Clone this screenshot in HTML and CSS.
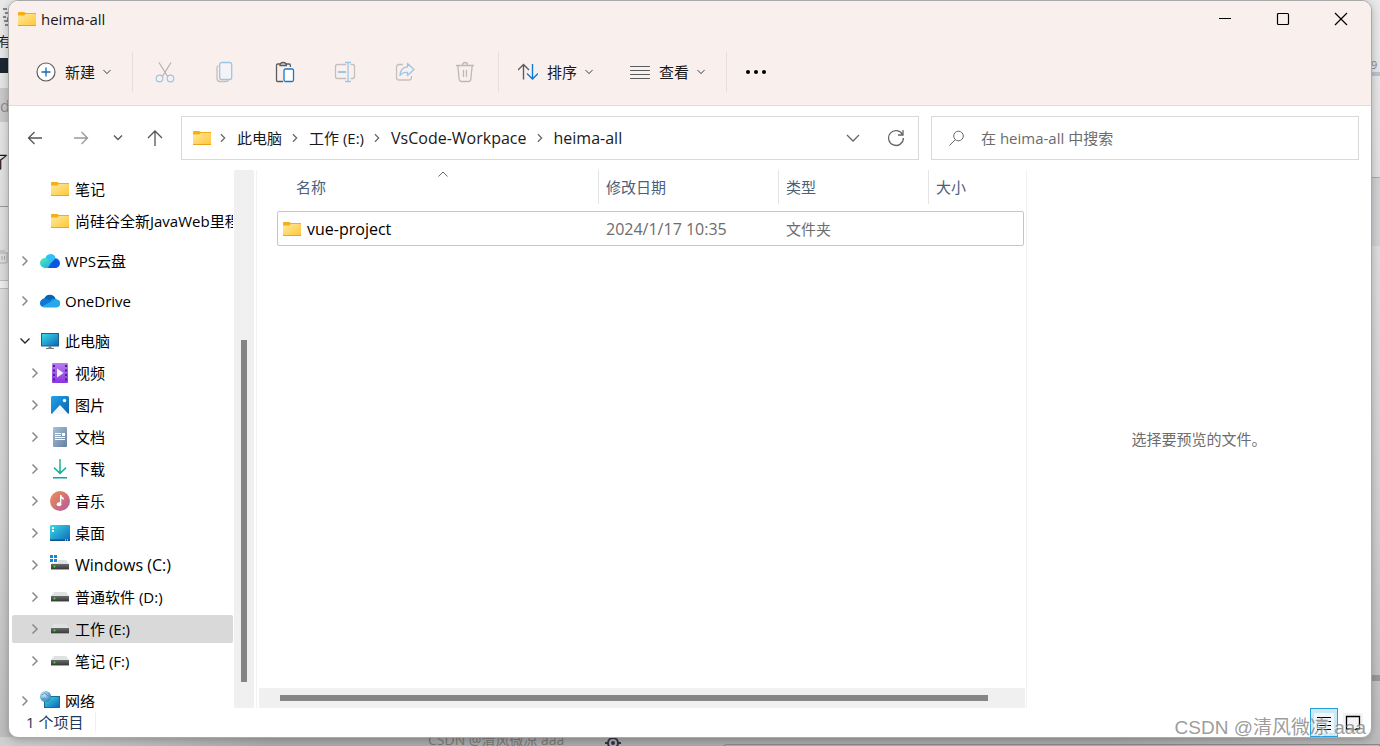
FILE: index.html
```html
<!DOCTYPE html>
<html lang="zh-CN">
<head>
<meta charset="utf-8">
<title>heima-all</title>
<link rel="stylesheet" href="styles.css">
</head>
<body>
<svg class="defs" aria-hidden="true">
  <defs>
    <linearGradient id="g-folder" x1="0" y1="0" x2="1" y2="1"><stop offset="0" stop-color="#ffe9a0"/><stop offset="1" stop-color="#ffc83a"/></linearGradient>
    <linearGradient id="g-screen" x1="0" y1="0" x2="1" y2="1"><stop offset="0" stop-color="#38dbe4"/><stop offset="1" stop-color="#0f67b9"/></linearGradient>
    <linearGradient id="g-video" x1="0" y1="0" x2="0" y2="1"><stop offset="0" stop-color="#b87cf5"/><stop offset="1" stop-color="#8a35e0"/></linearGradient>
    <linearGradient id="g-pic" x1="0" y1="0" x2="1" y2="1"><stop offset="0" stop-color="#1fa5ea"/><stop offset="1" stop-color="#0a5fae"/></linearGradient>
    <linearGradient id="g-doc" x1="0" y1="0" x2="1" y2="1"><stop offset="0" stop-color="#a9c0d8"/><stop offset="1" stop-color="#64809f"/></linearGradient>
    <linearGradient id="g-down" x1="0" y1="0" x2="0" y2="1"><stop offset="0" stop-color="#2fc48a"/><stop offset="1" stop-color="#0aa3a3"/></linearGradient>
    <linearGradient id="g-music" x1="0" y1="0" x2="1" y2="1"><stop offset="0" stop-color="#f0914f"/><stop offset="1" stop-color="#b0579f"/></linearGradient>
    <linearGradient id="g-wps" x1="0" y1="0" x2="1" y2="1"><stop offset="0" stop-color="#35c8f7"/><stop offset="1" stop-color="#0650dd"/></linearGradient>
    <linearGradient id="g-wps2" x1="0" y1="0" x2="1" y2="1"><stop offset="0" stop-color="#52efb4"/><stop offset="1" stop-color="#129ff0"/></linearGradient>
    <linearGradient id="g-drive" x1="0" y1="0" x2="0" y2="1"><stop offset="0" stop-color="#6b6b6b"/><stop offset="1" stop-color="#3a3a3a"/></linearGradient>
    <radialGradient id="g-globe" cx=".35" cy=".3" r=".8"><stop offset="0" stop-color="#d3eefa"/><stop offset="1" stop-color="#2377ae"/></radialGradient>
    <symbol id="i-folder" viewBox="0 0 20 20"><path d="M1 4q0-1 1-1h5l2 1h10v3H1z" fill="#f6ae16"/><path d="M1 6.500h6L9 5h9q1 0 1 1v10H1z" fill="url(#g-folder)"/><path d="M1 16h18v1H1z" fill="#e9a61c"/></symbol>
    <symbol id="i-right" viewBox="0 0 10 12"><path d="M2.500 1.500 7 6l-4.500 4.500" fill="none" stroke="currentColor" stroke-width="1.500"/></symbol>
    <symbol id="i-down" viewBox="0 0 12 10"><path d="M1.500 2.500 6 7l4.500-4.500" fill="none" stroke="currentColor" stroke-width="1.300"/></symbol>
    <symbol id="i-drive" viewBox="0 0 20 20"><path d="M4 5h12l3 4H1z" fill="#dfe1e4"/><rect x="1" y="9" width="18" height="5" fill="url(#g-drive)"/><rect x="1" y="14" width="18" height="1" fill="#a5a5a5"/><circle cx="4.500" cy="11.500" r="1" fill="#35e83a"/></symbol>
  </defs>
</svg>

<div class="backdrop" aria-hidden="true">
  <div class="edge edge-left">
    <svg class="frag frag-code" viewBox="0 0 6 20"><path d="M0 1h4M2 5h4M0 9h3M5 9v4M1 13h4M2 17h4" stroke="#667" stroke-width="1.500"/></svg>
    <span class="frag frag-you">有</span>
    <span class="frag frag-dark"></span>
    <span class="frag frag-light"></span>
    <span class="frag frag-d">d</span>
    <span class="frag frag-le">了</span>
    <span class="frag frag-line"></span>
    <svg class="frag frag-trash" viewBox="0 0 9 14"><path d="M0 3h8M0 1h5M7 3v9q0 1-1 1H0M2 6v4M4.500 6v4" fill="none" stroke="#aaa"/></svg>
    <span class="frag frag-panel"></span>
  </div>
  <div class="edge edge-right">
    <span class="frag frag-nine">9</span>
    <span class="frag frag-blue"></span>
    <span class="frag frag-shade"></span>
    <span class="frag frag-bar"></span>
  </div>
  <div class="edge edge-bottom">
    <span class="frag frag-mark">CSDN @清风微凉 aaa</span>
    <svg class="frag frag-target" viewBox="0 0 16 16"><circle cx="8" cy="8" r="5" fill="none" stroke="#333346" stroke-width="2"/><circle cx="8" cy="8" r="2" fill="#333346"/><path d="M0 8h4M12 8h4" stroke="#333346" stroke-width="2"/></svg>
    <span class="frag frag-sheet"></span>
  </div>
</div>

<div class="window">
  <header class="chrome">
    <div class="titlebar">
      <svg class="ico"><use href="#i-folder"/></svg>
      <h1 class="title">heima-all</h1>
      <div class="controls">
        <button class="control" aria-label="最小化"><svg viewBox="0 0 14 14"><path d="M1 6.500h12" stroke="#000"/></svg></button>
        <button class="control" aria-label="最大化"><svg viewBox="0 0 14 14"><rect x="1.500" y="1.500" width="11" height="11" rx="1" fill="none" stroke="#000" stroke-width="1.200"/></svg></button>
        <button class="control" aria-label="关闭"><svg viewBox="0 0 14 14"><path d="M1 1l12 12M13 1 1 13" stroke="#000" stroke-width="1.200"/></svg></button>
      </div>
    </div>
    <div class="toolbar">
      <button class="tool"><svg class="ico" viewBox="0 0 20 20" fill="none"><circle cx="10" cy="10" r="9" fill="#fff" stroke="#5c5c5c" stroke-width="1.200"/><path d="M10 5.500v9M5.500 10h9" stroke="#0f6cbd" stroke-width="1.300"/></svg>新建<svg class="caret"><use href="#i-down"/></svg></button>
      <span class="sep"></span>
      <div class="tool-group">
        <button class="tool-icon" disabled aria-label="剪切"><svg viewBox="0 0 22 22" fill="none" stroke-width="1.200"><path d="M5 1.500l8.500 13.800M17 1.500 8.500 15.300" stroke="#b5b0af"/><circle cx="5.500" cy="17.500" r="3.300" stroke="#9cc6e6"/><circle cx="16.500" cy="17.500" r="3.300" stroke="#9cc6e6"/></svg></button>
        <button class="tool-icon" disabled aria-label="复制"><svg viewBox="0 0 22 22" fill="none" stroke-width="1.300"><path d="M4.500 4.500q-1.500.5-1.500 2.500v10.500q0 3 3 3h6q2 0 2.500-1.500" stroke="#c4bfbe"/><rect x="5.700" y="1.500" width="12" height="17" rx="2" stroke="#9cc6e8" fill="#f5f3f5"/></svg></button>
        <button class="tool-icon" aria-label="粘贴"><svg viewBox="0 0 22 22" fill="none" stroke-width="1.300"><path d="M9 20.500H3.700q-1.200 0-1.200-1.200V4.200q0-1.200 1.200-1.200H6M12 3h3.200q1.200 0 1.200 1.200V6" stroke="#5c5c5c"/><path d="M6 4.500q0-3 3.200-3t3.200 3z" stroke="#5c5c5c" fill="#ddd"/><rect x="10" y="8" width="9.500" height="12.500" rx="1.500" stroke="#0f7ad3" fill="#fff"/></svg></button>
        <button class="tool-icon" disabled aria-label="重命名"><svg viewBox="0 0 22 22" fill="none" stroke-width="1.300"><path d="M12 3.500H3.500q-2 0-2 2v10q0 2 2 2H12M16.500 3.500h2q2 0 2 2v10q0 2-2 2h-2" stroke="#c4bfbe"/><path d="M11 1.500h6M11 20.500h6M14 1.500v19" stroke="#9cc6e8"/><path d="M4 11h8" stroke="#9cc6e8" stroke-width="2"/></svg></button>
        <button class="tool-icon" disabled aria-label="共享"><svg viewBox="0 0 22 22" fill="none" stroke-width="1.300"><path d="M9 3.500H5q-2.500 0-2.500 2.500v10.500q0 2.500 2.500 2.500h10q2.500 0 2.500-2.500V15" stroke="#c4bfbe"/><path d="M13.500 2.500 20 8.500l-6.500 6v-3.200q-5.500-.3-7.500 3.200.3-8 7.500-8.600z" stroke="#9cc6e8" stroke-linejoin="round"/></svg></button>
        <button class="tool-icon" disabled aria-label="删除"><svg viewBox="0 0 22 22" fill="none" stroke="#bdb8b7" stroke-width="1.300"><path d="M2 4.500h18M8.500 4q0-2.500 2.500-2.500T13.500 4M3.800 4.500l1.400 14q.2 2 2 2h7.600q1.800 0 2-2l1.400-14M9.500 9v7M12.500 9v7"/></svg></button>
      </div>
      <span class="sep"></span>
      <button class="tool"><svg class="ico" viewBox="0 0 20 20" fill="none" stroke-width="1.400"><path d="M5.500 17.500V2.500M0 8l5.500-5.500L11 8" stroke="#5c5c5c"/><path d="M14.500 2v15M9 11.500l5.500 5.500L20 11.500" stroke="#0f7ad3"/></svg>排序<svg class="caret"><use href="#i-down"/></svg></button>
      <button class="tool tool-view"><svg class="ico" viewBox="0 0 20 20" stroke="#5c5c5c"><path d="M0 4.500h20M0 8.500h20M0 12.500h20M0 16.500h20"/></svg>查看<svg class="caret"><use href="#i-down"/></svg></button>
      <span class="sep"></span>
      <button class="tool" aria-label="更多"><svg class="ico" viewBox="0 0 20 20"><circle cx="2" cy="10" r="2"/><circle cx="10" cy="10" r="2"/><circle cx="18" cy="10" r="2"/></svg></button>
    </div>
  </header>

  <div class="navrow">
    <div class="navbuttons">
      <button class="nav" aria-label="后退"><svg viewBox="0 0 16 16"><path d="M15 8H1.500M7.500 2l-6 6 6 6"/></svg></button>
      <button class="nav nav-dim" aria-label="前进"><svg viewBox="0 0 16 16"><path d="M1 8h13.500M8.500 2l6 6-6 6"/></svg></button>
      <button class="nav nav-small" aria-label="最近的位置"><svg viewBox="0 0 16 16"><path d="M4 5.500 8 9.500l4-4"/></svg></button>
      <button class="nav" aria-label="向上"><svg viewBox="0 0 16 16"><path d="M8 16V1M1 8l7-7 7 7"/></svg></button>
    </div>
    <nav class="address" aria-label="地址">
      <svg class="ico"><use href="#i-folder"/></svg>
      <svg class="crumb-sep"><use href="#i-right"/></svg><button class="crumb">此电脑</button>
      <svg class="crumb-sep"><use href="#i-right"/></svg><button class="crumb">工作 (E:)</button>
      <svg class="crumb-sep"><use href="#i-right"/></svg><button class="crumb latin">VsCode-Workpace</button>
      <svg class="crumb-sep"><use href="#i-right"/></svg><button class="crumb latin">heima-all</button>
      <div class="address-end">
        <button class="end-btn" aria-label="历史"><svg viewBox="0 0 18 18"><path d="M3 6l6 6 6-6"/></svg></button>
        <button class="end-btn" aria-label="刷新"><svg viewBox="0 0 18 18"><path d="M15.500 5.500A7.400 7.400 0 1 0 16.400 9M16 1v5h-5"/></svg></button>
      </div>
    </nav>
    <label class="search">
      <svg viewBox="0 0 16 16"><circle cx="9.500" cy="6" r="4.800"/><path d="M6.300 9.600 0.500 15.500"/></svg>
      <input type="text" aria-label="搜索" placeholder="在 heima-all 中搜索">
    </label>
  </div>

  <main class="panes">
    <aside class="sidebar">
      <ul class="tree">
        <li><button class="node sub"><span class="twist"></span><svg class="ico"><use href="#i-folder"/></svg>笔记</button></li>
        <li><button class="node sub"><span class="twist"></span><svg class="ico"><use href="#i-folder"/></svg>尚硅谷全新JavaWeb里程</button></li>
        <li class="root"><button class="node"><svg class="twist"><use href="#i-right"/></svg><svg class="ico" viewBox="0 0 20 20"><path d="M10.500 3a5 5 0 0 1 4.800 4 5 5 0 0 1-.8 10H8z" fill="url(#g-wps)"/><circle cx="10.200" cy="8" r="4.800" fill="#2fc0fa"/><path d="M5 7q3 0 5 3l5 7H5A5 5 0 0 1 5 7z" fill="url(#g-wps2)"/><path d="M8 17q2-5 7-9 4.500.5 4.500 4.500T15 17z" fill="#0758e0"/></svg>WPS云盘</button></li>
        <li class="root"><button class="node"><svg class="twist"><use href="#i-right"/></svg><svg class="ico" viewBox="0 0 20 20"><path d="M4 8a6.200 6.200 0 0 1 11.500-.5L11 12z" fill="#0364b8"/><path d="M0 12a4.500 4.500 0 0 1 5-4.500q2 0 4 1.500l5 3-11 4A4 4 0 0 1 0 12z" fill="#0f78d4"/><path d="M14.500 7.500A4.300 4.300 0 0 1 17 8.200l-4 3-3-2q1.500-1.700 4.500-1.700z" fill="#1490df"/><path d="M2 15.500 12 10q2-1.500 4-1.500a4 4 0 0 1 .5 8H5q-2 0-3-1z" fill="#28a8ea"/></svg>OneDrive</button></li>
        <li class="root"><button class="node open"><svg class="twist twist-open"><use href="#i-down"/></svg><svg class="ico" viewBox="0 0 20 20"><rect x="1" y="2" width="18" height="13.500" fill="#1d5f86"/><rect x="2" y="3" width="16" height="11.500" fill="url(#g-screen)"/><path d="M8.500 15.500h3V17H14v1H6v-1h2.500z" fill="#6d7780"/></svg>此电脑</button>
          <ul class="branch">
            <li><button class="node sub"><svg class="twist"><use href="#i-right"/></svg><svg class="ico" viewBox="0 0 20 20"><rect x="2" width="16" height="20" rx="1" fill="url(#g-video)"/><path d="M3 2h2v2H3zm0 4.500h2v2H3zm0 4.500h2v2H3zm0 4.500h2v2H3zM15 2h2v2h-2zm0 4.500h2v2h-2zm0 4.500h2v2h-2zm0 4.500h2v2h-2z" fill="#4b2380"/><path d="M7 5.500v9l6.500-4.500z" fill="#f4f0fa"/></svg>视频</button></li>
            <li><button class="node sub"><svg class="twist"><use href="#i-right"/></svg><svg class="ico" viewBox="0 0 20 20"><rect x="1" y="1" width="18" height="18" rx="1.500" fill="url(#g-pic)"/><path d="M2 18.500 10 10l8 8.500q-.5.500-1 .500H3z" fill="#f2f8fd"/><circle cx="14.500" cy="5.500" r="1.700" fill="#fff"/></svg>图片</button></li>
            <li><button class="node sub"><svg class="twist"><use href="#i-right"/></svg><svg class="ico" viewBox="0 0 20 20"><rect x="3" width="14" height="20" rx="1" fill="url(#g-doc)"/><path d="M5 6.500h6M5 8.500h6M5 10.500h10M5 12.500h10" stroke="#fff"/><rect x="12" y="6" width="3" height="3" fill="#fff"/></svg>文档</button></li>
            <li><button class="node sub"><svg class="twist"><use href="#i-right"/></svg><svg class="ico" viewBox="0 0 20 20"><path d="M9.200 0h1.600v12.500l4.700-4.500 1 1.200-6.500 6.300-6.500-6.300 1-1.200 4.700 4.500zM3 18h14v1.500H3z" fill="url(#g-down)"/></svg>下载</button></li>
            <li><button class="node sub"><svg class="twist"><use href="#i-right"/></svg><svg class="ico" viewBox="0 0 20 20"><circle cx="10" cy="10" r="10" fill="url(#g-music)"/><ellipse cx="9" cy="13.300" rx="2.300" ry="2" fill="#fff"/><path d="M10 4h1.300q.3 2 2.500 3v1.800q-1.800-.3-2.500-1.300V13.500H10z" fill="#fff"/></svg>音乐</button></li>
            <li><button class="node sub"><svg class="twist"><use href="#i-right"/></svg><svg class="ico" viewBox="0 0 20 20"><rect y="2" width="20" height="16" rx="1" fill="url(#g-screen)"/><path d="M0 16.500h20V17q0 1-1 1H1q-1 0-1-1z" fill="#0c5291"/><path d="M2 4h2v2H2zm0 3h2v2H2z" fill="#fff"/><path d="M15 17h1M17 17h1" stroke="#fff"/></svg>桌面</button></li>
            <li><button class="node sub latin"><svg class="twist"><use href="#i-right"/></svg><svg class="ico"><use href="#i-drive"/><path d="M0 0h8v8H0z" fill="#fff"/><path d="M0 0h3v3H0zm4 0h3v3H4zM0 4h3v3H0zm4 0h3v3H4z" fill="#1489d8"/></svg>Windows (C:)</button></li>
            <li><button class="node sub"><svg class="twist"><use href="#i-right"/></svg><svg class="ico"><use href="#i-drive"/></svg>普通软件 (D:)</button></li>
            <li><button class="node sub selected"><svg class="twist"><use href="#i-right"/></svg><svg class="ico"><use href="#i-drive"/></svg>工作 (E:)</button></li>
            <li><button class="node sub"><svg class="twist"><use href="#i-right"/></svg><svg class="ico"><use href="#i-drive"/></svg>笔记 (F:)</button></li>
          </ul>
        </li>
        <li class="root"><button class="node"><svg class="twist"><use href="#i-right"/></svg><svg class="ico" viewBox="0 0 20 20"><rect x="4" y="5" width="16" height="12" fill="#1b6a96"/><rect x="5" y="6" width="14" height="10" fill="url(#g-screen)"/><circle cx="5.500" cy="5.500" r="5.500" fill="url(#g-globe)"/><path d="M2 4q3-3 4-1t3 2M2 8q3-2 5 1" stroke="#3f93c2" fill="none"/></svg>网络</button></li>
      </ul>
      <div class="vscroll"><span class="vthumb"></span></div>
    </aside>

    <section class="files">
      <table class="list">
        <colgroup><col class="c-name"><col class="c-date"><col class="c-type"><col></colgroup>
        <thead>
          <tr>
            <th scope="col"><div class="head">名称<svg class="sorted" viewBox="0 0 12 8"><path d="M1.500 6.500 6 2l4.500 4.500" fill="none" stroke="#666"/></svg></div></th>
            <th scope="col"><div class="head">修改日期</div></th>
            <th scope="col"><div class="head">类型</div></th>
            <th scope="col"><div class="head">大小</div></th>
          </tr>
        </thead>
        <tbody>
          <tr class="row">
            <td class="latin"><div class="file"><svg class="ico"><use href="#i-folder"/></svg>vue-project</div></td>
            <td class="latin">2024/1/17 10:35</td>
            <td>文件夹</td>
            <td></td>
          </tr>
        </tbody>
      </table>
      <div class="hscroll"><span class="hthumb"></span></div>
    </section>

    <section class="preview">选择要预览的文件。</section>
  </main>

  <footer class="status">
    <span class="count">1 个项目</span>
    <div class="views">
      <button class="view view-on" aria-label="详细信息"><svg viewBox="0 0 20 20"><rect width="20" height="20" fill="#f0f6f9"/><path d="M3 4.500h14M3 8.500h14M3 12.500h14M3 16.500h14" stroke="#000"/></svg></button>
      <button class="view" aria-label="大图标"><svg viewBox="0 0 20 20"><rect width="20" height="20" fill="#f3f3f3"/><path d="M7 16H3.500V3.500h13V16H13M7 16.500h6" fill="none" stroke="#000" stroke-width="1.300"/></svg></button>
    </div>
    <span class="watermark">CSDN @清风微凉 aaa</span>
  </footer>
</div>
</body>
</html>
```
FILE: styles.css
```css
* { box-sizing: border-box; }

body {
  margin: 0;
  height: 100vh;
  padding: 0 8px;
  display: flex;
  overflow: hidden;
  background: linear-gradient(#e9e9e9, #cfcfcf 70%, #bdbdbd);
  color: #191919;
  font: 15px/20px "Open Sans", "Noto Sans CJK SC", sans-serif;
}

button {
  margin: 0;
  padding: 0;
  border: 0;
  background: none;
  color: inherit;
  font: inherit;
}

svg { display: block; flex: none; }
.defs { position: absolute; width: 0; height: 0; }
.ico { width: 20px; height: 20px; }
.latin { font-size: 16px; }

/* Desktop behind the window */
.backdrop { position: absolute; inset: 0; overflow: hidden; }
.edge { position: absolute; overflow: hidden; }
.edge-left { left: 0; top: 0; bottom: 0; width: 9px; }
.edge-right { right: 0; top: 0; bottom: 0; width: 9px; }
.edge-bottom { left: 0; right: 0; bottom: 0; height: 9px; background: linear-gradient(90deg, #d0d0d0, #aaa 20%, #aaa 80%, #bbb); }
.frag { position: absolute; }
.frag-code { left: 3px; top: 8px; width: 6px; height: 20px; }
.frag-you { left: -2px; top: 31px; font-size: 13px; }
.frag-dark { left: 0; top: 58px; width: 9px; height: 15px; background: #1c2733; }
.frag-light { left: 0; top: 88px; width: 9px; height: 34px; background: #c9c9c9; }
.frag-d { left: 0; top: 96px; color: #8d8d8d; font-size: 16px; }
.frag-le { left: -8px; top: 152px; font-size: 17px; }
.frag-line { left: 0; top: 206px; width: 9px; height: 1px; background: #999; }
.frag-trash { left: 0; top: 250px; width: 9px; height: 14px; }
.frag-panel { left: 0; top: 280px; width: 9px; height: 9px; border: solid #bbb; border-width: 1px 0; background: #ececec; }
.frag-nine { left: 0; top: 55px; color: #888; font-size: 11px; }
.frag-blue { left: 0; top: 72px; width: 9px; height: 4px; background: #b9c3ce; }
.frag-shade { left: 0; top: 177px; width: 9px; height: 69px; border-top: 1px solid #aaa; background: #d0d1d4; }
.frag-bar { left: 0; top: 675px; width: 9px; height: 6px; background: #999; }
.frag-mark { left: 428px; top: -7px; color: #777; font-size: 14px; white-space: nowrap; }
.frag-target { left: 605px; top: -2px; width: 16px; height: 16px; }
.frag-sheet { left: 721px; right: 0; top: 7px; height: 9px; border: 1px solid #888; border-radius: 6px 0 0 0; }

/* Window */
.window {
  position: relative;
  flex: 1;
  min-width: 0;
  margin-bottom: 8px;
  display: flex;
  flex-direction: column;
  overflow: hidden;
  border: 1px solid #a9a9a9;
  border-radius: 10px;
  background: #fff;
  box-shadow: 0 2px 8px rgba(0, 0, 0, .25);
}

.chrome { background: #f9f0ee; border-bottom: 1px solid #e2dcda; }
.titlebar { display: flex; align-items: center; height: 36px; padding: 0 1px 0 8px; }
.title { margin: 0 0 0 4px; font-size: 15px; font-weight: 400; }
.controls { display: flex; margin-left: auto; }
.control { width: 58px; height: 36px; display: grid; place-items: center; }
.control svg { width: 14px; height: 14px; }

.toolbar { display: flex; align-items: center; height: 68px; padding: 2px 0 0 27px; }
.tool { display: flex; align-items: center; gap: 9px; height: 40px; }
.tool-view { margin-left: 36px; }
.caret { width: 10px; height: 8px; margin-left: -2px; color: #666; }
.sep { width: 1px; height: 40px; margin: 0 19px 0 20px; background: #e8dfdd; }
.tool-group { display: flex; margin: 0 -17px; }
.tool-icon { width: 60px; height: 40px; display: grid; place-items: center; }
.tool-icon svg { width: 22px; height: 22px; }

/* Navigation and address */
.navrow { display: flex; align-items: center; gap: 12px; padding: 10px 12px 10px 8px; }
.navbuttons { display: flex; flex: none; align-items: center; width: 152px; padding-left: 8px; gap: 17px; }
.nav { width: 20px; height: 36px; display: grid; place-items: center; color: #555; }
.nav:first-child { margin-right: 9px; }
.nav-dim { color: #999; }
.nav svg { width: 16px; height: 16px; fill: none; stroke: currentColor; stroke-width: 1.300; }
.address, .search { display: flex; align-items: center; height: 44px; border: 1px solid #d9d9d9; min-width: 0; }
.address { flex: 738 1 738px; padding-left: 10px; }
.address > .ico { margin-right: -2px; }
.crumb { white-space: nowrap; }
.crumb-sep { width: 10px; height: 10px; margin: 0 9px 0 8px; color: #666; }
.address-end { display: flex; margin-left: auto; padding-right: 7px; }
.end-btn { display: grid; place-items: center; width: 30px; height: 36px; margin-left: 13px; }
.end-btn svg { width: 18px; height: 18px; fill: none; stroke: #666; stroke-width: 1.300; }
.search { flex: 428 1 428px; padding-left: 17px; gap: 16px; }
.search svg { width: 16px; height: 16px; fill: none; stroke: #666; }
.search input { flex: 1; min-width: 0; padding: 0; border: 0; outline: 0; background: none; color: #191919; font: inherit; }
.search input::placeholder { color: #6b6b6b; opacity: 1; }

/* Panes */
.panes { flex: 1; min-height: 0; display: flex; }
.sidebar { flex: none; width: 248px; display: flex; border-right: 1px solid #f2f2f2; }
.tree, .branch { list-style: none; margin: 0; padding: 0; }
.tree { flex: 1; min-width: 0; overflow: hidden; padding: 5px 1px 0 3px; }
.root { padding-top: 8px; }
.node { display: flex; align-items: center; width: 100%; height: 28px; margin-bottom: 4px; padding-left: 8px; border-radius: 2px; color: #000; white-space: nowrap; overflow: hidden; }
.node.sub { padding-left: 18px; }
.node .ico { margin-right: 5px; }
.twist { flex: none; width: 10px; height: 12px; margin-right: 10px; color: #8a8a8a; }
.twist-open { width: 12px; height: 10px; margin: 0 9px 0 -1px; color: #222; }
.selected { background: #d9d9d9; }
.vscroll { flex: none; width: 20px; margin-right: 2px; padding: 170px 7px 26px; background: #f0f0f0; }
.vthumb { display: block; height: 100%; background: #858585; }

.files { flex: none; width: 770px; padding-left: 2px; display: flex; flex-direction: column; justify-content: space-between; border-right: 1px solid #f2f2f2; }
.list { width: 747px; margin-left: 18px; table-layout: fixed; border-spacing: 0; color: #6d6d6d; }
.c-name { width: 321px; }
.c-date { width: 180px; }
.c-type { width: 150px; }
.list th { padding: 0 0 7px; font-weight: 400; text-align: left; }
.head { position: relative; display: flex; align-items: center; height: 34px; padding-left: 7px; border-left: 1px solid #e5e5e5; color: #4c607a; }
th:first-child .head { padding-left: 18px; border-color: transparent; }
.sorted { position: absolute; left: 159px; top: 0; width: 12px; height: 8px; }
.list td { height: 35px; padding: 0 0 0 8px; }
.list td:first-child { padding-left: 5px; }
.row { outline: 1px solid #99d1ff; outline-offset: -1px; border-radius: 2px; }
.file { display: flex; align-items: center; gap: 5px; color: #000; }
.hscroll { height: 20px; padding: 7px 37px 7px 21px; margin-right: 1px; background: #f0f0f0; }
.hthumb { display: block; height: 6px; background: #858585; }

.preview { flex: 1; display: grid; place-items: center; color: #6d6d6d; }

/* Status bar */
.status { position: relative; display: flex; height: 29px; padding-left: 17px; }
.count { height: 20px; margin-top: 4px; padding-right: 12px; border-right: 1px solid #f0f0f0; color: #1e395b; }
.views { display: flex; gap: 1px; margin-left: auto; padding-right: 5px; }
.view { display: grid; place-items: center; width: 27px; height: 29px; }
.view svg { width: 20px; height: 20px; }
.view-on { width: 28px; border: 1px solid #26a0da; background: #cce8f6; }
.watermark { position: absolute; right: 5px; bottom: -2px; color: rgba(130, 130, 130, .8); font: 19px/22px "Liberation Sans", "Noto Sans CJK SC", sans-serif; text-shadow: 1px 1px 0 rgba(255, 255, 255, .7); pointer-events: none; }
```
